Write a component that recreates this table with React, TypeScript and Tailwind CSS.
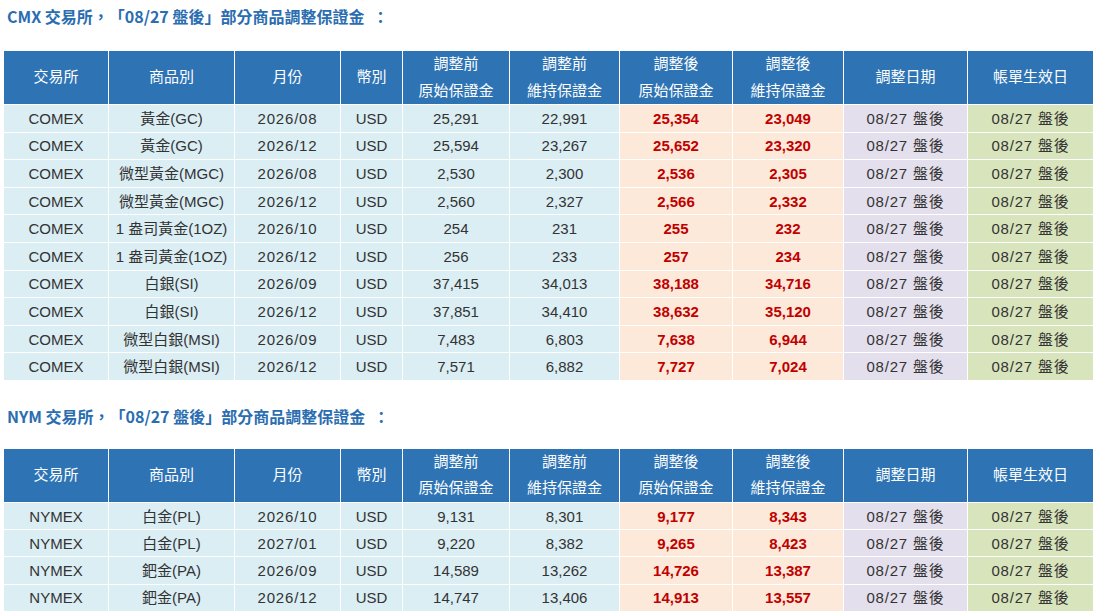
import React from "react";

type Row = {
  ex: string;
  product: string;
  month: string;
  cur: string;
  preInit: string;
  preMaint: string;
  postInit: string;
  postMaint: string;
};

const cmxRows: Row[] = [
  { ex: "COMEX", product: "黃金(GC)", month: "2026/08", cur: "USD", preInit: "25,291", preMaint: "22,991", postInit: "25,354", postMaint: "23,049" },
  { ex: "COMEX", product: "黃金(GC)", month: "2026/12", cur: "USD", preInit: "25,594", preMaint: "23,267", postInit: "25,652", postMaint: "23,320" },
  { ex: "COMEX", product: "微型黃金(MGC)", month: "2026/08", cur: "USD", preInit: "2,530", preMaint: "2,300", postInit: "2,536", postMaint: "2,305" },
  { ex: "COMEX", product: "微型黃金(MGC)", month: "2026/12", cur: "USD", preInit: "2,560", preMaint: "2,327", postInit: "2,566", postMaint: "2,332" },
  { ex: "COMEX", product: "1 盎司黃金(1OZ)", month: "2026/10", cur: "USD", preInit: "254", preMaint: "231", postInit: "255", postMaint: "232" },
  { ex: "COMEX", product: "1 盎司黃金(1OZ)", month: "2026/12", cur: "USD", preInit: "256", preMaint: "233", postInit: "257", postMaint: "234" },
  { ex: "COMEX", product: "白銀(SI)", month: "2026/09", cur: "USD", preInit: "37,415", preMaint: "34,013", postInit: "38,188", postMaint: "34,716" },
  { ex: "COMEX", product: "白銀(SI)", month: "2026/12", cur: "USD", preInit: "37,851", preMaint: "34,410", postInit: "38,632", postMaint: "35,120" },
  { ex: "COMEX", product: "微型白銀(MSI)", month: "2026/09", cur: "USD", preInit: "7,483", preMaint: "6,803", postInit: "7,638", postMaint: "6,944" },
  { ex: "COMEX", product: "微型白銀(MSI)", month: "2026/12", cur: "USD", preInit: "7,571", preMaint: "6,882", postInit: "7,727", postMaint: "7,024" },
];

const nymRows: Row[] = [
  { ex: "NYMEX", product: "白金(PL)", month: "2026/10", cur: "USD", preInit: "9,131", preMaint: "8,301", postInit: "9,177", postMaint: "8,343" },
  { ex: "NYMEX", product: "白金(PL)", month: "2027/01", cur: "USD", preInit: "9,220", preMaint: "8,382", postInit: "9,265", postMaint: "8,423" },
  { ex: "NYMEX", product: "鈀金(PA)", month: "2026/09", cur: "USD", preInit: "14,589", preMaint: "13,262", postInit: "14,726", postMaint: "13,387" },
  { ex: "NYMEX", product: "鈀金(PA)", month: "2026/12", cur: "USD", preInit: "14,747", preMaint: "13,406", postInit: "14,913", postMaint: "13,557" },
];

const widths = [105, 126, 106, 62, 107, 110, 113, 111, 124, 126];

const th = "border border-white bg-[#2e74b5] text-white font-normal text-[15px] leading-[26.5px] text-center align-middle";
const td = "border border-white text-center align-middle text-[15px] leading-none";

const MarginTable = ({ rows, rowH }: { rows: Row[]; rowH: string }) => (
  <table className="table-fixed border-collapse w-[1090px]">
    <colgroup>
      {widths.map((w, i) => (
        <col key={i} style={{ width: w }} />
      ))}
    </colgroup>
    <thead>
      <tr className="h-[53px]">
        <th className={th}>交易所</th>
        <th className={th}>商品別</th>
        <th className={th}>月份</th>
        <th className={th}>幣別</th>
        <th className={th}>
          調整前
          <br />
          原始保證金
        </th>
        <th className={th}>
          調整前
          <br />
          維持保證金
        </th>
        <th className={th}>
          調整後
          <br />
          原始保證金
        </th>
        <th className={th}>
          調整後
          <br />
          維持保證金
        </th>
        <th className={th}>調整日期</th>
        <th className={th}>帳單生效日</th>
      </tr>
    </thead>
    <tbody className="text-[#333]">
      {rows.map((r, i) => (
        <tr key={i} className={rowH}>
          <td className={`${td} bg-[#daeef3]`}>{r.ex}</td>
          <td className={`${td} bg-[#daeef3]`}>{r.product}</td>
          <td className={`${td} bg-[#daeef3] tracking-[0.8px]`}>{r.month}</td>
          <td className={`${td} bg-[#daeef3]`}>{r.cur}</td>
          <td className={`${td} bg-[#daeef3]`}>{r.preInit}</td>
          <td className={`${td} bg-[#daeef3]`}>{r.preMaint}</td>
          <td className={`${td} bg-[#fde9d9] text-[#c00000] font-bold`}>{r.postInit}</td>
          <td className={`${td} bg-[#fde9d9] text-[#c00000] font-bold`}>{r.postMaint}</td>
          <td className={`${td} bg-[#e4dfec] tracking-[0.8px]`}>08/27 盤後</td>
          <td className={`${td} bg-[#d8e4bc] tracking-[0.8px]`}>08/27 盤後</td>
        </tr>
      ))}
    </tbody>
  </table>
);

const Title = ({ code }: { code: string }) => (
  <h2 className="pl-1 text-[16px] leading-[24px] font-bold text-[#2a6db0] [text-spacing-trim:space-all] font-['Noto_Sans_CJK_TC','Noto_Sans',sans-serif]">
    {code} 交易所<span>，</span>「08/27 盤後」部分商品調整保證金
    <span className="ml-[8px]">：</span>
  </h2>
);

export default function App() {
  return (
    <div
      lang="zh-Hant-TW"
      className="w-[1100px] h-[616px] overflow-hidden bg-white pl-[3px] pt-1 font-['Liberation_Sans','Noto_Sans_CJK_TC',sans-serif]"
    >
      <Title code="CMX" />
      <div className="mt-[22px]">
        <MarginTable rows={cmxRows} rowH="h-[27.6px]" />
      </div>
      <div className="mt-[23px]">
        <Title code="NYM" />
      </div>
      <div className="mt-[20px]">
        <MarginTable rows={nymRows} rowH="h-[27.25px]" />
      </div>
    </div>
  );
}
